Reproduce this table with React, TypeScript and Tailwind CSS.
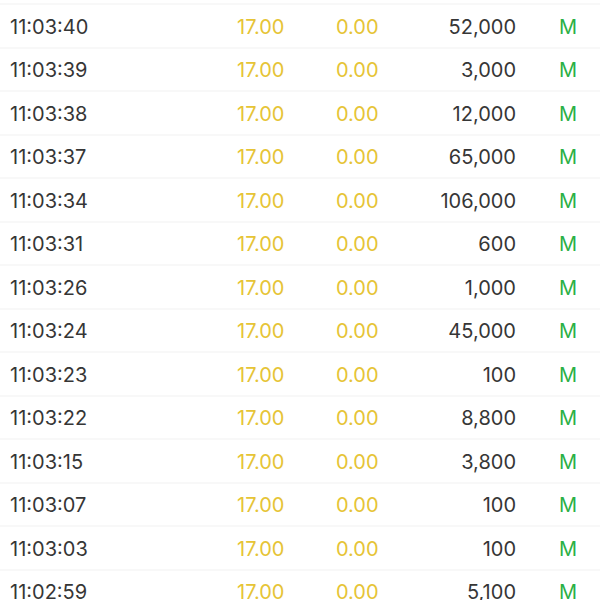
const rows: [string, string][] = [
  ["11:03:40", "52,000"],
  ["11:03:39", "3,000"],
  ["11:03:38", "12,000"],
  ["11:03:37", "65,000"],
  ["11:03:34", "106,000"],
  ["11:03:31", "600"],
  ["11:03:26", "1,000"],
  ["11:03:24", "45,000"],
  ["11:03:23", "100"],
  ["11:03:22", "8,800"],
  ["11:03:15", "3,800"],
  ["11:03:07", "100"],
  ["11:03:03", "100"],
  ["11:02:59", "5,100"],
];

export default function App() {
  return (
    <div
      className="w-[600px] h-[600px] overflow-hidden bg-white pt-[3px]"
      style={{ fontFamily: "Inter, 'Noto Sans', sans-serif" }}
    >
      {rows.map(([time, vol]) => (
        <div
          key={time}
          className="flex items-center h-[43.5px] border-t-2 border-[#f8f8f8] pl-[10px] pt-[2px] text-[20px] leading-none"
        >
          <span className="w-[227px] text-[#363636]">{time}</span>
          <span className="w-[99px] text-[#e6c436]">17.00</span>
          <span className="w-[84px] text-[#e6c436]">0.00</span>
          <span className="w-[96px] text-right text-[#363636]">{vol}</span>
          <span className="ml-[43px] text-[#2bb046]">M</span>
        </div>
      ))}
    </div>
  );
}
